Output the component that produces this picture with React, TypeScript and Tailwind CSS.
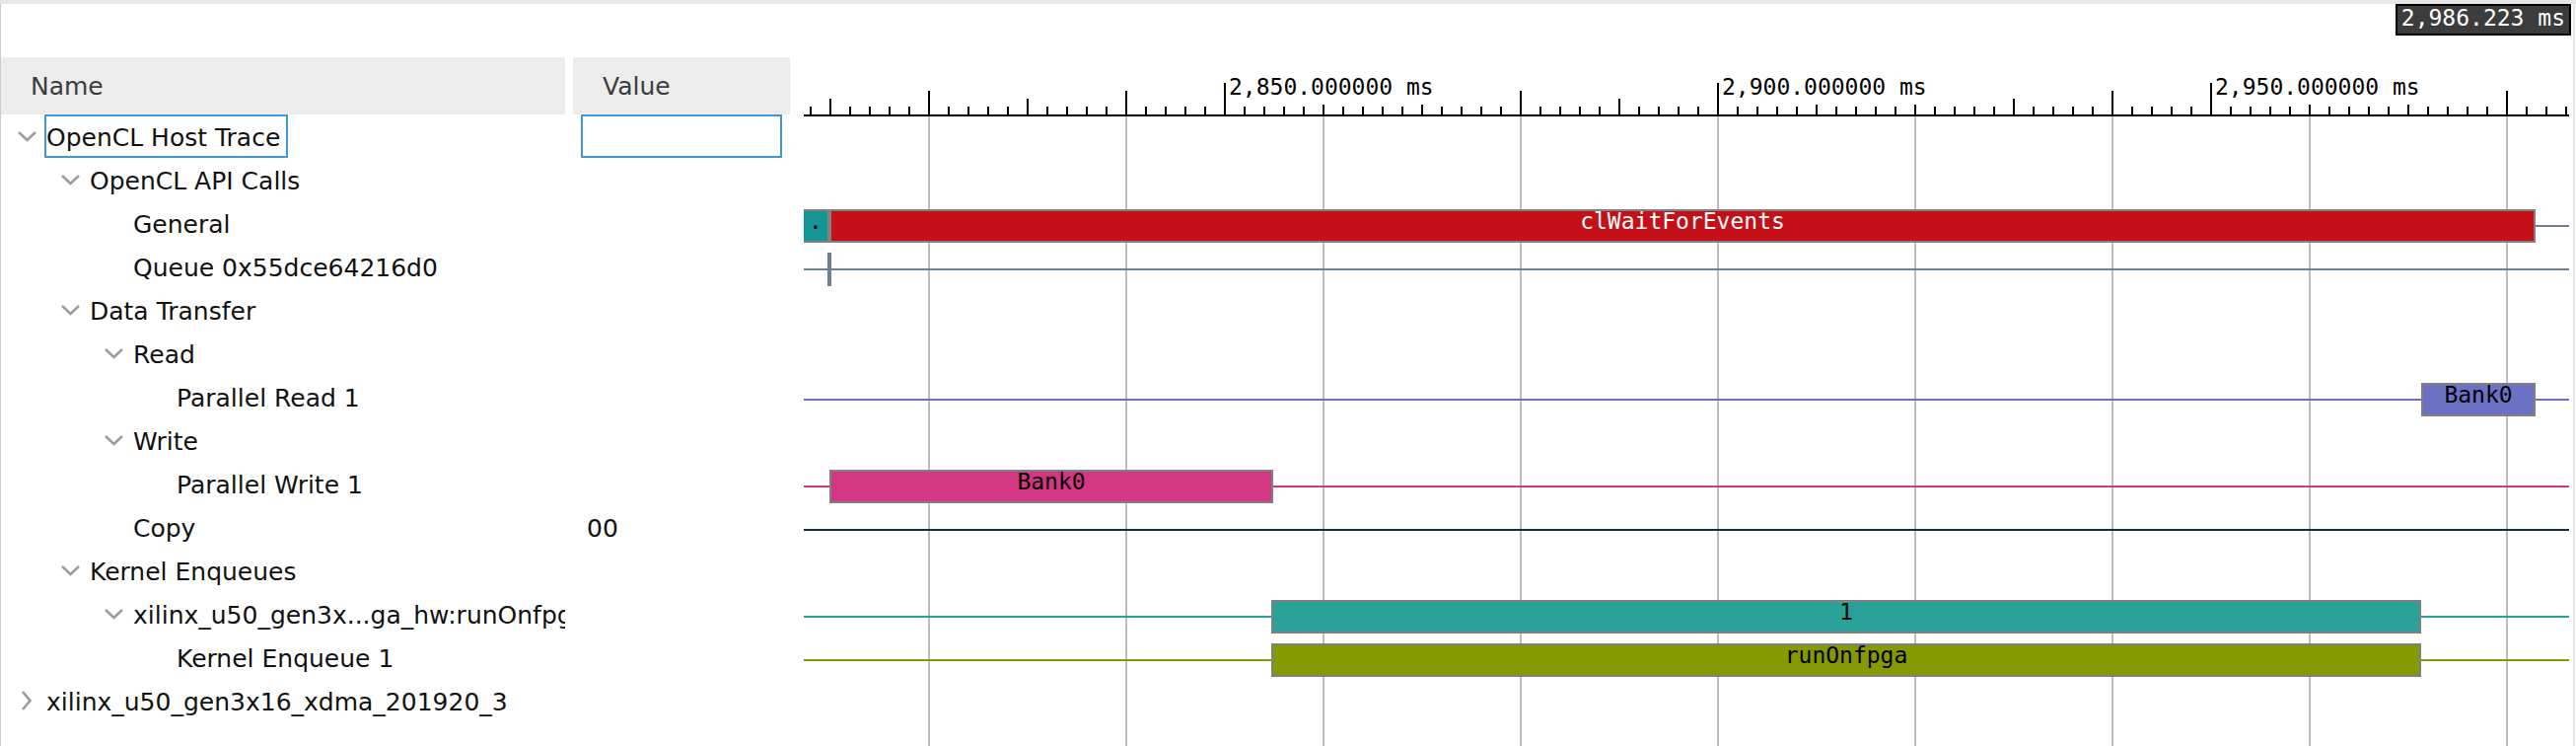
import React from "react";

type Span = { start: number; end: number; label: string; className: string; open?: boolean };

type Row = {
  name: string;
  level: number;
  toggle?: "open" | "closed";
  focused?: boolean;
  value?: string;
  line?: string;
  spans?: Span[];
  event?: number;
};

// Visible window of the trace, in milliseconds.
const VIEW_START = 2807.4;
const VIEW_END = 2986.4;
const toPercent = (t: number) => ((t - VIEW_START) / (VIEW_END - VIEW_START)) * 100;

const INDENT = ["pl-4", "pl-[60px]", "pl-[104px]", "pl-[148px]"];

const rows: Row[] = [
  { name: "OpenCL Host Trace", level: 0, toggle: "open", focused: true },
  { name: "OpenCL API Calls", level: 1, toggle: "open" },
  {
    name: "General",
    level: 2,
    line: "bg-[#708090]",
    spans: [
      { start: VIEW_START, end: 2810, label: ".", className: "bg-[#149494] text-black", open: true },
      { start: 2810, end: 2983, label: "clWaitForEvents", className: "bg-[#c61018] text-white" },
    ],
  },
  { name: "Queue 0x55dce64216d0", level: 2, line: "bg-[#708090]", event: 2809.8 },
  { name: "Data Transfer", level: 1, toggle: "open" },
  { name: "Read", level: 2, toggle: "open" },
  {
    name: "Parallel Read 1",
    level: 3,
    line: "bg-[#6c71c4]",
    spans: [{ start: 2971.4, end: 2983, label: "Bank0", className: "bg-[#6c71c4] text-black" }],
  },
  { name: "Write", level: 2, toggle: "open" },
  {
    name: "Parallel Write 1",
    level: 3,
    line: "bg-[#d33682]",
    spans: [{ start: 2810, end: 2855, label: "Bank0", className: "bg-[#d33682] text-black" }],
  },
  { name: "Copy", level: 2, value: "00", line: "bg-[#073642]" },
  { name: "Kernel Enqueues", level: 1, toggle: "open" },
  {
    name: "xilinx_u50_gen3x...ga_hw:runOnfpga",
    level: 2,
    toggle: "open",
    line: "bg-[#2aa198]",
    spans: [{ start: 2854.8, end: 2971.4, label: "1", className: "bg-[#2aa198] text-black" }],
  },
  {
    name: "Kernel Enqueue 1",
    level: 3,
    line: "bg-[#859900]",
    spans: [{ start: 2854.8, end: 2971.4, label: "runOnfpga", className: "bg-[#859900] text-black" }],
  },
  { name: "xilinx_u50_gen3x16_xdma_201920_3", level: 0, toggle: "closed" },
];

const ticks = Array.from({ length: 90 }, (_, i) => 2808 + i * 2);
const gridTimes = ticks.filter((t) => t % 20 === 0);
const labels = [
  { time: 2850, text: "2,850.000000 ms" },
  { time: 2900, text: "2,900.000000 ms" },
  { time: 2950, text: "2,950.000000 ms" },
];

function tickHeight(t: number) {
  if (t % 50 === 0) return "h-8";
  if (t % 20 === 0) return "h-6";
  if (t % 10 === 0) return "h-4";
  return "h-2";
}

function Chevron({ closed }: { closed: boolean }) {
  return (
    <svg viewBox="0 0 20 20" className="size-5" fill="none" stroke="#9c9c9c" strokeWidth="2.6">
      <path d={closed ? "M6 1 L13.5 10 L6 19" : "M2 6 L10.5 14 L19 6"} />
    </svg>
  );
}

function TreeTable() {
  return (
    <table className="w-[800px] shrink-0 table-fixed border-separate border-spacing-0 self-start text-left text-[25px] leading-10">
      <colgroup>
        <col />
        <col className="w-[228px]" />
      </colgroup>
      <thead className="text-[#3c3c3c]">
        <tr className="h-[58px]">
          <th className="bg-[#ececec] pt-0.5 pb-0 pl-[30px] font-normal">Name</th>
          <th className="border-l-8 border-white bg-[#ececec] pt-0.5 pb-0 pl-[30px] font-normal">Value</th>
        </tr>
      </thead>
      <tbody className="text-[#111]">
        {rows.map((row) => (
          <tr key={row.name} className="h-11">
            <td className="p-0">
              <div className={`flex h-11 items-center overflow-hidden whitespace-nowrap ${INDENT[row.level]}`}>
                <div className="flex w-7 shrink-0">
                  {row.toggle && (
                    <button type="button" aria-label={`Toggle ${row.name}`} aria-expanded={row.toggle === "open"}>
                      <Chevron closed={row.toggle === "closed"} />
                    </button>
                  )}
                </div>
                <span
                  className={`flex h-11 items-center pt-1 pr-2 pl-0.5 ${
                    row.focused ? "inset-ring-2 inset-ring-[#4097d5]" : ""
                  }`}
                >
                  {row.name}
                </span>
              </div>
            </td>
            <td className="py-0 pr-2 pl-4">
              {row.focused ? (
                <input
                  aria-label={`${row.name} value`}
                  className="block h-11 w-full border-2 border-[#4097d5] px-1 outline-none"
                />
              ) : (
                <span className="flex h-11 items-center pt-1 pl-1.5">{row.value}</span>
              )}
            </td>
          </tr>
        ))}
      </tbody>
    </table>
  );
}

function Ruler() {
  return (
    <div className="relative h-[58px]">
      {ticks.map((t) => (
        <div
          key={t}
          className={`absolute bottom-0 w-0.5 bg-black ${tickHeight(t)}`}
          style={{ left: `${toPercent(t)}%` }}
        />
      ))}
      {labels.map((l) => (
        <div
          key={l.time}
          className="absolute bottom-2.5 ml-[5px] bg-white pb-1 leading-7 whitespace-nowrap"
          style={{ left: `${toPercent(l.time)}%` }}
        >
          {l.text}
        </div>
      ))}
    </div>
  );
}

function Lane({ row }: { row: Row }) {
  return (
    <div className="relative h-11">
      {row.line && <div className={`absolute inset-x-0 top-6 h-0.5 ${row.line}`} />}
      {row.event && (
        <div
          className="absolute top-2 h-[34px] w-1 bg-[#708090]"
          style={{ left: `${toPercent(row.event)}%` }}
        />
      )}
      {row.spans?.map((s) => (
        <div
          key={s.label}
          className={`absolute top-2 h-[34px] overflow-hidden border-2 border-[#808080] text-center leading-5 ${
            s.open ? "border-l-0" : ""
          } ${s.className}`}
          style={{ left: `${toPercent(s.start)}%`, width: `${toPercent(s.end) - toPercent(s.start)}%` }}
        >
          {s.label}
        </div>
      ))}
    </div>
  );
}

function Timeline() {
  return (
    <div className="relative mr-1 flex min-w-0 flex-1 flex-col font-['DejaVu_Sans_Mono',monospace] text-[23px] text-black">
      <div className="absolute top-0 -right-0.5 border-2 border-black bg-[#3c3c3c] px-1 pb-1 leading-6 whitespace-nowrap text-white">
        2,986.223 ms
      </div>
      <div className="h-[54px]" />
      <Ruler />
      <div className="relative flex-1">
        <div className="absolute inset-0 overflow-hidden border-t-2 border-black">
          {gridTimes.map((t) => (
            <div
              key={t}
              className="absolute inset-y-0 w-0.5 bg-[#bebebe]"
              style={{ left: `${toPercent(t)}%` }}
            />
          ))}
        </div>
        {rows.map((row) => (
          <Lane key={row.name} row={row} />
        ))}
      </div>
    </div>
  );
}

export default function App() {
  return (
    <div className="flex min-h-screen flex-col bg-white font-['DejaVu_Sans',sans-serif]">
      <div className="h-1 bg-[#e6e6e6]" />
      <main className="mr-px flex flex-1 gap-3.5 border-r-2 border-l border-r-[#e6e6e6] border-l-[#cccccc]">
        <div className="pt-[54px]">
          <TreeTable />
        </div>
        <Timeline />
      </main>
    </div>
  );
}
